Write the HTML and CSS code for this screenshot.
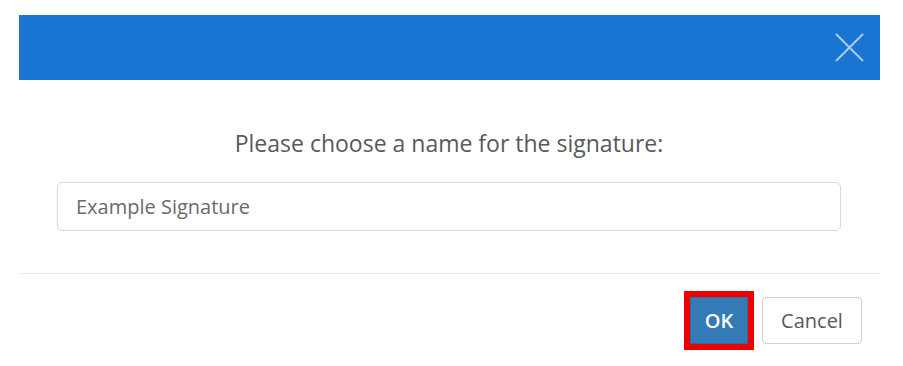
FILE: index.html
```html
<!DOCTYPE html>
<html>
<head>
<meta charset="utf-8">
<link rel="stylesheet" href="styles.css">
</head>
<body>
<div class="modal">
  <div class="modal-header">
    <button class="close" aria-label="Close">
      <svg width="29" height="29" viewBox="0 0 29 29"><path d="M1 1 L28 28 M28 1 L1 28" stroke="#a9cbef" stroke-width="2" fill="none"/></svg>
    </button>
  </div>
  <div class="modal-body">
    <div class="title">Please choose a name for the signature:</div>
    <input class="name-input" type="text" value="Example Signature">
  </div>
  <div class="modal-footer">
    <button class="btn btn-ok">OK</button>
    <button class="btn btn-cancel">Cancel</button>
  </div>
</div>
</body>
</html>
```

FILE: styles.css
```css
html, body {
  margin: 0;
  padding: 0;
  background: #ffffff;
}
body {
  padding: 15px 23px 0 19px;
  font-family: "Open Sans", "Liberation Sans", sans-serif;
}
.modal {
  width: 861px;
  background: #ffffff;
  display: flex;
  flex-direction: column;
}
.modal-header {
  height: 65px;
  background: #1a76d2;
  display: flex;
  align-items: center;
  justify-content: flex-end;
  padding-right: 16px;
}
.close {
  background: none;
  border: 0;
  padding: 0;
  width: 29px;
  height: 29px;
  display: flex;
  cursor: pointer;
}
.modal-body {
  padding: 48px 39px 42px 38px;
  display: flex;
  flex-direction: column;
}
.title {
  text-align: center;
  font-size: 23px;
  line-height: 30px;
  color: #595959;
  margin-bottom: 24px;
}
.name-input {
  box-sizing: border-box;
  width: 100%;
  height: 49px;
  border: 1px solid #d9d9d9;
  border-radius: 5px;
  padding: 0 18px;
  font-family: "Open Sans", "Liberation Sans", sans-serif;
  font-size: 20px;
  color: #6a6a6a;
  outline: none;
}
.modal-footer {
  border-top: 1px solid #e8e8e8;
  padding: 23px 18px 22px 0;
  display: flex;
  justify-content: flex-end;
  gap: 14px;
}
.btn {
  box-sizing: border-box;
  height: 47px;
  font-family: "Open Sans", "Liberation Sans", sans-serif;
  font-size: 20px;
  border-radius: 4px;
  padding: 0;
  cursor: pointer;
}
.btn-ok {
  width: 58px;
  background: #337ab7;
  color: #ffffff;
  font-weight: 600;
  border: 1px solid #2e6da4;
  outline: 6px solid #ee0000;
  border-radius: 0;
}
.btn-cancel {
  width: 100px;
  background: #ffffff;
  color: #595959;
  border: 1px solid #d0d0d0;
}
```
